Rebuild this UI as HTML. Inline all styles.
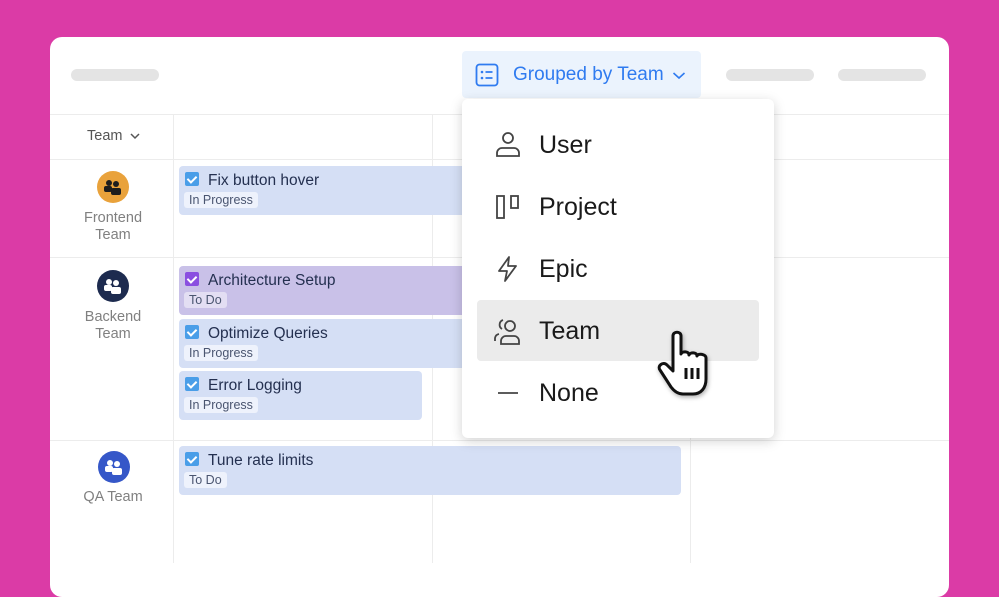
<!DOCTYPE html>
<html><head><style>
*{box-sizing:border-box;margin:0;padding:0}
body{width:999px;height:563px;background:#db3ba6;font-family:"Liberation Sans",sans-serif;position:relative;overflow:hidden}
.card{position:absolute;left:50px;top:37px;width:899px;height:560px;background:#fff;border-radius:12px;overflow:hidden}
.abs{position:absolute}
.pill{position:absolute;height:12px;border-radius:6px;background:#e4e4e4;top:69px}
.hl{position:absolute;left:50px;width:899px;height:1px;background:#ececec}
.vl{position:absolute;width:1px;background:#ececec}
.task{position:absolute;background:#d5dff5;border-radius:4px;height:49px}
.task .t{position:absolute;left:29px;top:6px;font-size:15.5px;color:#243050}
.task .cb{position:absolute;left:6px;top:6px;width:14px;height:14px;border-radius:2px;background:#4a9ee8}
.task .cb:after{content:"";position:absolute;left:4px;top:2px;width:4px;height:7px;border:solid #fff;border-width:0 2px 2px 0;transform:rotate(45deg)}
.task .s{position:absolute;left:5px;top:26px;background:#eef2fc;border-radius:3px;font-size:12.5px;color:#4a5570;padding:1px 5px;}
.team{position:absolute;width:124px;text-align:center;font-size:14.5px;color:#808080;line-height:17px}
.av{position:absolute;width:32px;height:32px;border-radius:50%}
.mi{position:absolute;left:539px;font-size:25px;color:#1a1a1a}
</style></head><body>
<div class="card"></div>
<div class="pill" style="left:71px;width:88px"></div>
<div class="pill" style="left:726px;width:88px"></div>
<div class="pill" style="left:838px;width:88px"></div>
<div class="hl" style="top:114px"></div>
<div class="hl" style="top:159px"></div>
<div class="hl" style="top:257px"></div>
<div class="hl" style="top:440px"></div>
<div class="vl" style="left:173px;top:114px;height:449px"></div>
<div class="vl" style="left:432px;top:114px;height:449px"></div>
<div class="vl" style="left:690px;top:114px;height:449px"></div>
<div class="abs" style="left:87px;top:128px;font-size:14.5px;color:#555">Team <svg width="10" height="8" viewBox="0 0 10 8" style="margin-left:3px"><path d="M1 2l4 4 4-4" fill="none" stroke="#555" stroke-width="1.5"/></svg></div>

<div class="av" style="left:97px;top:171px;background:#e9a23b"></div>
<div class="team" style="left:51px;top:210px">Frontend<br>Team</div>
<div class="av" style="left:97px;top:270px;background:#1d2b4f"></div>
<div class="team" style="left:51px;top:309px">Backend<br>Team</div>
<div class="av" style="left:98px;top:451px;background:#3557c8"></div>
<div class="team" style="left:51px;top:489px">QA Team</div>
<svg class="abs" style="left:97px;top:171px" width="32" height="32"><g fill="#1d1d1d"><circle cx="12" cy="12" r="3"/><circle cx="19" cy="13" r="3"/><rect x="7" y="15" width="8" height="6" rx="2"/><rect x="14" y="17" width="10" height="7" rx="2"/></g></svg>
<svg class="abs" style="left:97px;top:270px" width="32" height="32"><g fill="#fff"><circle cx="12" cy="12" r="3"/><circle cx="19" cy="13" r="3"/><rect x="7" y="15" width="8" height="6" rx="2"/><rect x="14" y="17" width="10" height="7" rx="2"/></g></svg>
<svg class="abs" style="left:98px;top:451px" width="32" height="32"><g fill="#fff"><circle cx="12" cy="12" r="3"/><circle cx="19" cy="13" r="3"/><rect x="7" y="15" width="8" height="6" rx="2"/><rect x="14" y="17" width="10" height="7" rx="2"/></g></svg>

<div class="task" style="left:179px;top:166px;width:300px"><div class="cb"></div><div class="t">Fix button hover</div><div class="s">In Progress</div></div>
<div class="task" style="left:179px;top:266px;width:300px;background:#c9c1e8"><div class="cb" style="background:#8a4fe0"></div><div class="t">Architecture Setup</div><div class="s" style="background:#e3def3">To Do</div></div>
<div class="task" style="left:179px;top:319px;width:300px"><div class="cb"></div><div class="t">Optimize Queries</div><div class="s">In Progress</div></div>
<div class="task" style="left:179px;top:371px;width:243px"><div class="cb"></div><div class="t">Error Logging</div><div class="s">In Progress</div></div>
<div class="task" style="left:179px;top:446px;width:502px"><div class="cb"></div><div class="t">Tune rate limits</div><div class="s">To Do</div></div>

<div class="abs" style="left:462px;top:51px;width:239px;height:47px;background:#ebf3fd;border-radius:4px"></div>
<svg class="abs" style="left:475px;top:63px" width="24" height="24" viewBox="0 0 24 24"><rect x="1.5" y="1.5" width="21" height="21" rx="3" fill="none" stroke="#2f7bf0" stroke-width="1.8"/><circle cx="7" cy="9" r="1.3" fill="#2f7bf0"/><circle cx="7" cy="15" r="1.3" fill="#2f7bf0"/><path d="M10.5 9h7M10.5 15h7" stroke="#2f7bf0" stroke-width="1.8"/></svg>
<div class="abs" style="left:513px;top:64px;font-size:19px;color:#2f7bf0">Grouped by Team</div>
<svg class="abs" style="left:672px;top:71px" width="14" height="9"><path d="M1.5 2l5.5 5 5.5-5" fill="none" stroke="#2f7bf0" stroke-width="1.6"/></svg>

<div class="abs" style="left:462px;top:99px;width:312px;height:339px;background:#fff;border-radius:6px;box-shadow:0 3px 12px rgba(0,0,0,.18)"></div>
<div class="abs" style="left:477px;top:300px;width:282px;height:61px;background:#ebebeb;border-radius:4px"></div>
<svg class="abs" style="left:494px;top:130px" width="28" height="28" viewBox="0 0 28 28" fill="none" stroke="#444" stroke-width="1.8"><circle cx="14" cy="8" r="5"/><path d="M3 26v-3a5 5 0 0 1 5-5h12a5 5 0 0 1 5 5v3z"/></svg>
<div class="mi" style="top:131px">User</div>
<svg class="abs" style="left:494px;top:193px" width="28" height="28" viewBox="0 0 28 28" fill="none" stroke="#444" stroke-width="1.8"><rect x="3" y="3" width="7" height="22"/><rect x="17" y="3" width="7" height="12"/></svg>
<div class="mi" style="top:193px">Project</div>
<svg class="abs" style="left:494px;top:255px" width="28" height="28" viewBox="0 0 28 28" fill="none" stroke="#444" stroke-width="1.8" stroke-linejoin="round"><path d="M15 2L5 16h8l-2 10 11-15h-8z"/></svg>
<div class="mi" style="top:255px">Epic</div>
<svg class="abs" style="left:492px;top:316px" width="32" height="30" viewBox="0 0 32 30" fill="none" stroke="#444" stroke-width="1.8"><circle cx="18" cy="10" r="5"/><path d="M9 28v-3a5 5 0 0 1 5-5h8a5 5 0 0 1 5 5v3z"/><path d="M11 4a5 5 0 0 0-1 9M3 25v-3a5 5 0 0 1 4-4"/></svg>
<div class="mi" style="top:317px">Team</div>
<svg class="abs" style="left:496px;top:385px" width="24" height="16"><path d="M2 8h20" stroke="#444" stroke-width="1.8"/></svg>
<div class="mi" style="top:379px">None</div>

<svg class="abs" style="left:656px;top:328px;filter:drop-shadow(1px 2px 2px rgba(0,0,0,.3))" width="62" height="72" viewBox="0 0 62 72"><path d="M17 8c0-5 8-5 8 0v18c1-3 8-3 8 1 1-3 8-3 8 1 1-3 9-2 9 2v21c0 9-5 15-13 15H27c-5 0-9-3-12-7L4 42c-3-4 3-9 7-5l6 6z" fill="#fff" stroke="#111" stroke-width="3" stroke-linejoin="round"/><path d="M30 40v11M36 40v11M42 40v11" stroke="#111" stroke-width="3"/></svg>
</body></html>
